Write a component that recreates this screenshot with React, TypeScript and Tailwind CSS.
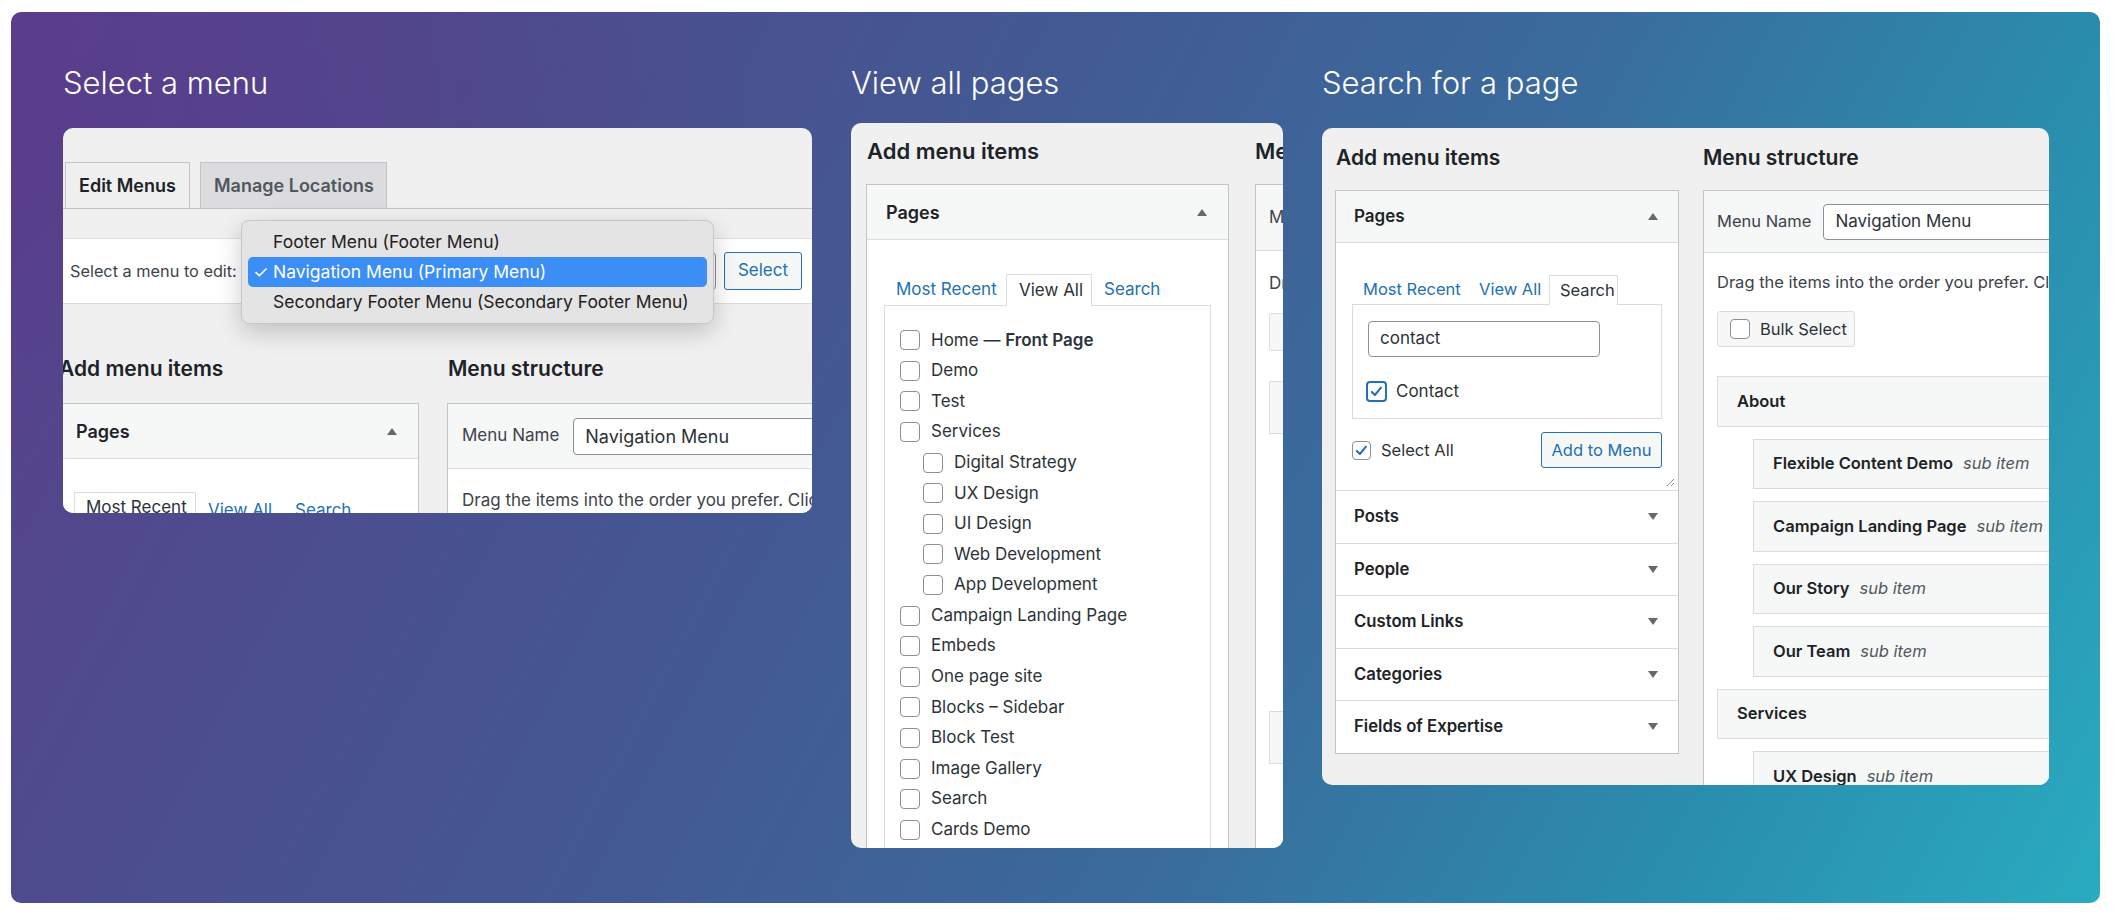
import React from 'react';

const Tri = ({ up = false }: { up?: boolean }) => (
  <svg width="10" height="7" viewBox="0 0 10 7" className="shrink-0">
    <polygon points={up ? '0,7 5,0 10,7' : '0,0 10,0 5,7'} fill="#646970" />
  </svg>
);

function Check({ on = false, focus = false, size = 'w-[20px] h-[20px]' }: { on?: boolean; focus?: boolean; size?: string }) {
  return (
    <span
      className={`flex shrink-0 items-center justify-center rounded-[4px] bg-white ${size} ${
        focus ? 'border-2 border-[#2271b1]' : 'border border-[#8c8f94]'
      }`}
    >
      {on && (
        <svg viewBox="0 0 20 20" className="h-full w-full">
          <path d="M4.5 10.5l3.6 3.6 7.2-8.6" fill="none" stroke="#2271b1" strokeWidth="2.4" strokeLinecap="round" strokeLinejoin="round" />
        </svg>
      )}
    </span>
  );
}

function Title({ children }: { children: React.ReactNode }) {
  return <h1 className="h-[40px] text-[31px] font-light leading-[40px] text-white">{children}</h1>;
}

function SelectMenuCard() {
  return (
    <div className="relative mt-[25px] h-[385px] w-[749px] overflow-hidden rounded-[10px] bg-[#f0f0f1]">
      <div className="mt-[34px] flex h-[47px] items-end gap-[10px] border-b border-[#c3c4c7] pl-[2px]">
        <div className="flex h-[46px] w-[125px] items-center border border-b-0 border-[#c3c4c7] pl-[13px] text-[18px] font-semibold text-[#1d2327]">
          Edit Menus
        </div>
        <div className="flex h-[46px] w-[187px] items-center border border-b-0 border-[#c3c4c7] bg-[#dcdcde] pl-[13px] text-[18px] font-semibold text-[#50575e]">
          Manage Locations
        </div>
      </div>

      <div className="mt-[29px] flex h-[66px] items-center border-y border-[#dcdcde] bg-white pl-[7px] pr-[10px]">
        <span className="shrink-0 whitespace-nowrap text-[16.3px] text-[#3c434a]">Select a menu to edit:</span>
        <div className="ml-[6px] h-[38px] flex-1 rounded-[4px] border border-[#8c8f94] bg-white" />
        <button className="ml-[8px] h-[38px] w-[78px] shrink-0 rounded-[3px] border border-[#2271b1] bg-[#f6f7f7] text-[17px] text-[#2271b1]">
          Select
        </button>
      </div>

      <div className="-ml-[4px] mt-[51px] flex gap-[28px]">
        <div className="w-[360px] shrink-0">
          <h2 className="whitespace-nowrap text-[21px] font-semibold leading-[28px] text-[#1d2327]">Add menu items</h2>
          <div className="mt-[20px] border border-[#c3c4c7] bg-white">
            <div className="flex h-[55px] items-center justify-between border-b border-[#dcdcde] bg-[#f6f7f7] pl-[16px] pr-[21px]">
              <span className="text-[18px] font-semibold text-[#1d2327]">Pages</span>
              <Tri up />
            </div>
            <div className="h-[120px] pl-[14px] pt-[33px]">
              <div className="flex h-[31px] items-end whitespace-nowrap text-[17px]">
                <div className="flex h-[31px] w-[122px] shrink-0 items-center border border-b-0 border-[#dcdcde] pl-[11px] text-[#2c3338]">Most Recent</div>
                <div className="w-[87px] shrink-0 pl-[12px] text-[#2271b1]">View All</div>
                <div className="pl-[12px] text-[#2271b1]">Search</div>
              </div>
            </div>
          </div>
        </div>
        <div className="w-[500px] shrink-0">
          <h2 className="whitespace-nowrap pl-[1px] text-[21px] font-semibold leading-[28px] text-[#1d2327]">Menu structure</h2>
          <div className="mt-[20px] border border-[#c3c4c7] bg-white">
            <div className="flex h-[65px] items-center border-b border-[#dcdcde] bg-[#f6f7f7] pl-[14px]">
              <span className="shrink-0 whitespace-nowrap text-[17px] text-[#3c434a]">Menu Name</span>
              <div className="ml-[14px] flex h-[37px] w-[300px] shrink-0 items-center rounded-[4px] border border-[#8c8f94] bg-white pl-[11px] text-[18px] text-[#2c3338]">
                Navigation Menu
              </div>
            </div>
            <div className="h-[80px] whitespace-nowrap pl-[14px] pt-[19px] text-[17px] leading-[24px] text-[#3c434a]">
              Drag the items into the order you prefer. Click the arrow on the right
            </div>
          </div>
        </div>
      </div>

      <div className="absolute left-[178px] top-[92px] w-[473px] whitespace-nowrap rounded-[8px] border border-[#c6c6c6] bg-[#e4e4e4] p-[6px] text-[17.5px] text-[#222] shadow-[0_8px_24px_rgba(0,0,0,0.2)]">
        <div className="flex h-[30px] items-center pl-[25px]">Footer Menu (Footer Menu)</div>
        <div className="flex h-[30px] items-center rounded-[5px] bg-[#3a8ef5] pl-[5px] text-white">
          <span className="w-[20px]">✓</span>
          Navigation Menu (Primary Menu)
        </div>
        <div className="flex h-[30px] items-center pl-[25px]">Secondary Footer Menu (Secondary Footer Menu)</div>
      </div>
    </div>
  );
}

const pageRows: { label: string; bold?: string; child?: boolean }[] = [
  { label: 'Home — ', bold: 'Front Page' },
  { label: 'Demo' },
  { label: 'Test' },
  { label: 'Services' },
  { label: 'Digital Strategy', child: true },
  { label: 'UX Design', child: true },
  { label: 'UI Design', child: true },
  { label: 'Web Development', child: true },
  { label: 'App Development', child: true },
  { label: 'Campaign Landing Page' },
  { label: 'Embeds' },
  { label: 'One page site' },
  { label: 'Blocks – Sidebar' },
  { label: 'Block Test' },
  { label: 'Image Gallery' },
  { label: 'Search' },
  { label: 'Cards Demo' },
  { label: 'Cards Demo Child', child: true },
];

function ViewAllCard() {
  return (
    <div className="mt-[20px] h-[725px] w-[432px] overflow-hidden rounded-[10px] bg-[#f0f0f1] pt-[14px]">
      <div className="flex gap-[26px] pl-[15px]">
        <div className="w-[363px] shrink-0">
          <h2 className="pl-[1px] text-[22px] font-semibold leading-[28px] text-[#1d2327]">Add menu items</h2>
          <div className="mt-[19px] h-[800px] border border-[#c3c4c7] bg-white">
            <div className="flex h-[55px] items-center justify-between border-b border-[#dcdcde] bg-[#f6f7f7] pl-[19px] pr-[21px]">
              <span className="text-[18px] font-semibold text-[#1d2327]">Pages</span>
              <Tri up />
            </div>
            <div className="px-[17px] pt-[34px]">
              <div className="relative z-10 flex h-[31px] items-end whitespace-nowrap text-[17px]">
                <div className="flex h-[31px] w-[122px] shrink-0 items-center pl-[12px] text-[#2271b1]">Most Recent</div>
                <div className="-mb-px flex h-[32px] w-[86px] shrink-0 items-center border border-b-0 border-[#dcdcde] bg-white pl-[12px] text-[#2c3338]">
                  View All
                </div>
                <div className="flex h-[31px] items-center pl-[12px] text-[#2271b1]">Search</div>
              </div>
              <div className="h-[700px] border border-[#dcdcde] bg-white pl-[15px] pt-[19px]">
                {pageRows.map((r, i) => (
                  <div key={i} className={`flex h-[30.6px] items-center gap-[11px] ${r.child ? 'pl-[23px]' : ''}`}>
                    <Check />
                    <span className="whitespace-nowrap text-[17px] text-[#2c3338]">
                      {r.label}
                      {r.bold && <b className="font-semibold">{r.bold}</b>}
                    </span>
                  </div>
                ))}
              </div>
            </div>
          </div>
        </div>
        <div className="w-[400px] shrink-0">
          <h2 className="whitespace-nowrap text-[22px] font-semibold leading-[28px] text-[#1d2327]">Menu structure</h2>
          <div className="mt-[19px] h-[800px] border border-[#c3c4c7] bg-white">
            <div className="flex h-[66px] items-center whitespace-nowrap border-b border-[#dcdcde] bg-[#f6f7f7] pl-[13px] text-[17px] text-[#3c434a]">
              Menu Name
            </div>
            <div className="pl-[13px] pr-[10px] pt-[20px]">
              <div className="h-[24px] whitespace-nowrap text-[17px] leading-[24px] text-[#3c434a]">Drag the items into the order</div>
              <div className="mt-[18px] h-[38px] w-[150px] rounded-[3px] border border-[#dcdcde] bg-[#f6f7f7]" />
              <div className="mt-[30px] flex flex-col gap-[13px]">
                {[0, 1, 1, 1, 1, 0].map((c, i) => (
                  <div key={i} className={`h-[53px] border border-[#dcdcde] bg-[#f6f7f7] ${c ? 'ml-[36px]' : ''}`} />
                ))}
              </div>
            </div>
          </div>
        </div>
      </div>
    </div>
  );
}

const menuItems: { label: string; sub?: boolean }[] = [
  { label: 'About' },
  { label: 'Flexible Content Demo', sub: true },
  { label: 'Campaign Landing Page', sub: true },
  { label: 'Our Story', sub: true },
  { label: 'Our Team', sub: true },
  { label: 'Services' },
  { label: 'UX Design', sub: true },
];

function SearchCard() {
  return (
    <div className="mt-[25px] h-[657px] w-[727px] overflow-hidden rounded-[10px] bg-[#f0f0f1] pt-[16px]">
      <div className="flex gap-[24px] pl-[13px]">
        <div className="w-[344px] shrink-0">
          <h2 className="pl-[1px] text-[21px] font-semibold leading-[28px] text-[#1d2327]">Add menu items</h2>
          <div className="mt-[18px] border border-[#c3c4c7] bg-white">
            <div className="flex h-[52px] items-center justify-between border-b border-[#dcdcde] bg-[#f6f7f7] pl-[18px] pr-[20px]">
              <span className="text-[17px] font-semibold text-[#1d2327]">Pages</span>
              <Tri up />
            </div>
            <div className="relative px-[16px] pb-[22px] pt-[32px]">
              <div className="relative z-10 flex h-[29px] items-end whitespace-nowrap text-[16.5px]">
                <div className="flex h-[29px] w-[116px] shrink-0 items-center pl-[11px] text-[#2271b1]">Most Recent</div>
                <div className="flex h-[29px] w-[81px] shrink-0 items-center pl-[11px] text-[#2271b1]">View All</div>
                <div className="-mb-px flex h-[30px] w-[69px] shrink-0 items-center border border-b-0 border-[#dcdcde] bg-white pl-[10px] text-[#2c3338]">
                  Search
                </div>
              </div>
              <div className="h-[115px] border border-[#dcdcde] bg-white pl-[15px] pt-[16px]">
                <div className="flex h-[36px] w-[232px] items-center rounded-[4px] border border-[#8c8f94] bg-white pl-[11px] text-[17px] text-[#2c3338]">
                  contact
                </div>
                <div className="-ml-[2px] mt-[22px] flex items-center gap-[9px]">
                  <Check on focus size="w-[21px] h-[21px]" />
                  <span className="text-[17px] text-[#2c3338]">Contact</span>
                </div>
              </div>
              <div className="mt-[13px] flex h-[36px] items-center justify-between">
                <div className="flex items-center gap-[10px]">
                  <Check on size="w-[19px] h-[19px]" />
                  <span className="whitespace-nowrap text-[16.5px] text-[#2c3338]">Select All</span>
                </div>
                <button className="h-[36px] w-[121px] shrink-0 whitespace-nowrap rounded-[3px] border border-[#2271b1] bg-[#f6f7f7] text-[16.5px] text-[#2271b1]">
                  Add to Menu
                </button>
              </div>
              <svg width="10" height="10" viewBox="0 0 10 10" className="absolute bottom-[3px] right-[3px]">
                <path d="M9 2L2 9M9 6L6 9" stroke="#8c8f94" strokeWidth="1" />
              </svg>
            </div>
            {['Posts', 'People', 'Custom Links', 'Categories', 'Fields of Expertise'].map((t) => (
              <div key={t} className="flex h-[52.5px] items-center justify-between border-t border-[#dcdcde] pl-[18px] pr-[20px]">
                <span className="text-[16.7px] font-semibold text-[#1d2327]">{t}</span>
                <Tri />
              </div>
            ))}
          </div>
        </div>
        <div className="w-[420px] shrink-0">
          <h2 className="whitespace-nowrap text-[21px] font-semibold leading-[28px] text-[#1d2327]">Menu structure</h2>
          <div className="mt-[18px] h-[700px] border border-[#c3c4c7] bg-white">
            <div className="flex h-[62px] items-center border-b border-[#dcdcde] bg-[#f6f7f7] pl-[13px]">
              <span className="shrink-0 whitespace-nowrap text-[16.5px] text-[#3c434a]">Menu Name</span>
              <div className="ml-[12px] flex h-[36px] w-[300px] shrink-0 items-center whitespace-nowrap rounded-[4px] border border-[#8c8f94] bg-white pl-[11px] text-[17px] text-[#2c3338]">
                Navigation Menu
              </div>
            </div>
            <div className="pl-[13px] pt-[18px]">
              <div className="h-[22px] whitespace-nowrap text-[16.5px] leading-[22px] text-[#3c434a]">
                Drag the items into the order you prefer. Click the arrow
              </div>
              <div className="mt-[18px] flex h-[36px] w-[138px] items-center gap-[10px] rounded-[3px] border border-[#dcdcde] bg-[#f6f7f7] pl-[12px]">
                <Check />
                <span className="whitespace-nowrap text-[16.5px] text-[#2c3338]">Bulk Select</span>
              </div>
              <div className="mt-[29px] flex flex-col gap-[12px]">
                {menuItems.map((m, i) => (
                  <div
                    key={i}
                    className={`flex h-[50.5px] items-center gap-[10px] whitespace-nowrap border border-[#dcdcde] bg-[#f6f7f7] pl-[19px] ${m.sub ? 'ml-[36px]' : ''}`}
                  >
                    <span className="text-[16.5px] font-semibold text-[#1d2327]">{m.label}</span>
                    {m.sub && <span className="text-[16.5px] italic text-[#50575e]">sub item</span>}
                  </div>
                ))}
              </div>
            </div>
          </div>
        </div>
      </div>
    </div>
  );
}

export default function App() {
  return (
    <div className="h-[920px] w-[2124px] bg-white pl-[11px] pt-[12px] font-['Inter',sans-serif]">
      <div className="flex h-[891px] w-[2089px] items-start gap-[39px] overflow-hidden rounded-[10px] bg-[radial-gradient(ellipse_at_2%_15%,rgba(88,58,138,0.55)_0%,rgba(88,58,138,0)_25%),linear-gradient(118deg,#5b3e8c_0%,#4d4c8e_20%,#435993_41%,#3a6b9d_62%,#2a8dae_82%,#29abc0_100%)] pl-[52px] pt-[51px]">
        <div className="w-[749px] shrink-0">
          <Title>Select a menu</Title>
          <SelectMenuCard />
        </div>
        <div className="w-[432px] shrink-0">
          <Title>View all pages</Title>
          <ViewAllCard />
        </div>
        <div className="w-[727px] shrink-0">
          <Title>Search for a page</Title>
          <SearchCard />
        </div>
      </div>
    </div>
  );
}
